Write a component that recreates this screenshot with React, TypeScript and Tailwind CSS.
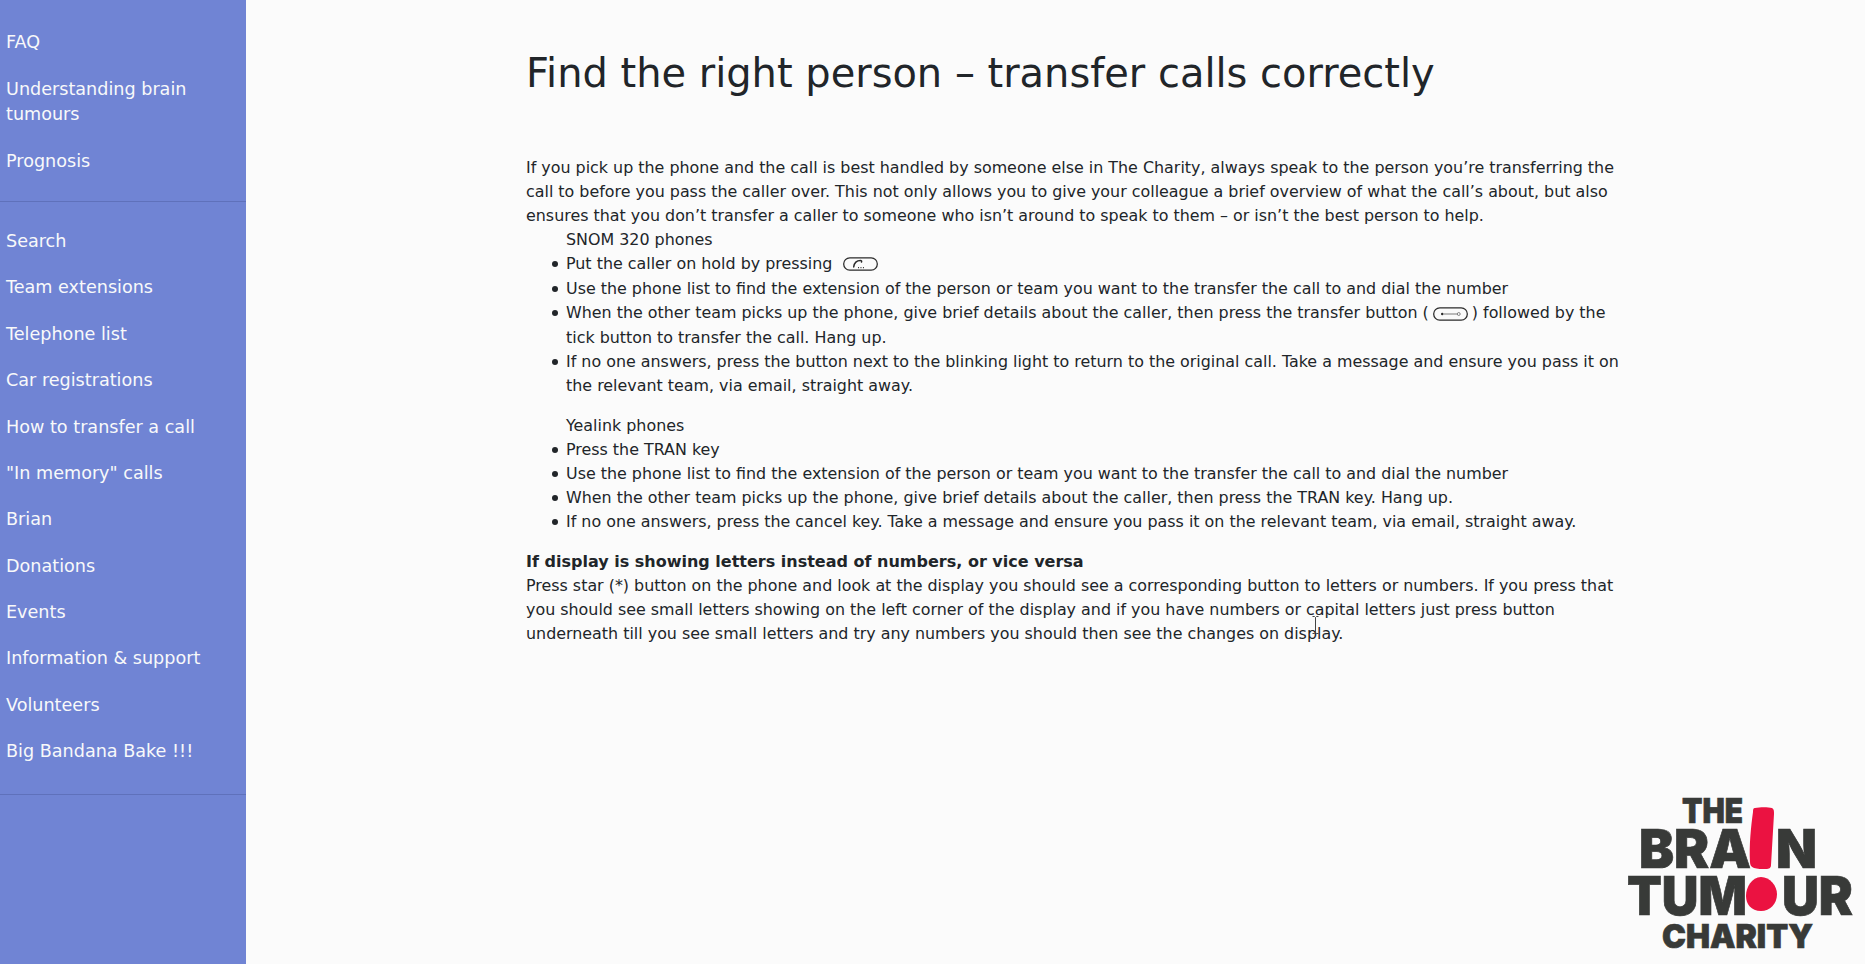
const topLinks = ["FAQ", "Understanding brain tumours", "Prognosis"];
const mainLinks = [
  "Search",
  "Team extensions",
  "Telephone list",
  "Car registrations",
  "How to transfer a call",
  '"In memory" calls',
  "Brian",
  "Donations",
  "Events",
  "Information & support",
  "Volunteers",
  "Big Bandana Bake !!!",
];

const bullet =
  "relative before:absolute before:top-[9px] before:left-[-14px] before:size-[6px] before:rounded-full before:bg-[#212529]";

function HoldKey() {
  return (
    <svg viewBox="0 0 36 14" className="mx-[6px] mb-[6px] inline-block h-[14px] w-[35px] align-[-8px]" fill="none">
      <rect x="0.7" y="0.7" width="34.6" height="12.6" rx="6.3" stroke="#2b2b2b" strokeWidth="1.3" />
      <path d="M11 10c.5-3.5 3-6.5 7-6.5 1 0 1.5.5 1 1.5" stroke="#2b2b2b" strokeWidth="1.5" strokeLinecap="round" />
      <path d="M15.5 10.7h1M18 10.7h1M20.5 10.7h1" stroke="#2b2b2b" strokeWidth="1.1" />
    </svg>
  );
}

function TransferKey() {
  return (
    <svg viewBox="0 0 36 14" className="mx-[4px] mb-[5px] inline-block h-[14px] w-[35px] align-[-8px]" fill="none">
      <rect x="0.7" y="0.7" width="34.6" height="12.6" rx="6.3" stroke="#2b2b2b" strokeWidth="1.3" />
      <circle cx="9.5" cy="7" r="1.3" fill="#2b2b2b" />
      <path d="M11 7h14" stroke="#666" strokeWidth="0.9" />
      <circle cx="26.5" cy="7" r="1.5" stroke="#666" strokeWidth="0.8" />
    </svg>
  );
}

function Logo() {
  const dark = "#383a38";
  const letter = {
    fontFamily: "Inter, 'Liberation Sans', sans-serif",
    fontWeight: 900,
    fill: dark,
    stroke: dark,
    strokeWidth: 0.7,
  };
  return (
    <svg viewBox="0 0 265 184" className="absolute right-0 bottom-0 h-[184px] w-[265px]">
      <text x="82" y="43" fontSize="34" textLength="61" lengthAdjust="spacingAndGlyphs" style={letter}>THE</text>
      <text x="39" y="88" fontSize="54" textLength="112" lengthAdjust="spacingAndGlyphs" style={letter}>BRA</text>
      <text x="176" y="88" fontSize="54" textLength="41" lengthAdjust="spacingAndGlyphs" style={letter}>N</text>
      <text x="27" y="135" fontSize="54" textLength="120" lengthAdjust="spacingAndGlyphs" style={letter}>TUM</text>
      <text x="182" y="135" fontSize="54" textLength="71" lengthAdjust="spacingAndGlyphs" style={letter}>UR</text>
      <text x="62" y="168" fontSize="33" textLength="151" lengthAdjust="spacingAndGlyphs" style={letter}>CHARITY</text>
      <path d="M155 28c5-1 13-1 17 0 2 1 2 3 2 6l-3 51c0 3-2 4-5 4-4 0-9 0-12-1-3-1-4-3-4-6-1-16 1-36 3-50 0-2 0-4 2-4z" fill="#eb1241" />
      <path d="M161 97c9 0 16 9 16 17 0 10-7 17-16 17-10 0-15-7-15-15 0-9 6-19 15-19z" fill="#eb1241" />
    </svg>
  );
}

function Cursor() {
  return (
    <svg viewBox="0 0 9 18" className="absolute top-[616px] left-[1311px] h-[18px] w-[9px]" fill="none">
      <path d="M1.5 .5h2l1 1 1-1h2M4.5 1.5v15M1.5 17.5h2l1-1 1 1h2" stroke="#444" strokeWidth="1" />
    </svg>
  );
}

export default function App() {
  return (
    <div className="relative flex h-[964px] overflow-hidden bg-[#fbfbfb] font-['DejaVu_Sans',sans-serif] text-[#212529]">
      <aside className="w-[246px] shrink-0 bg-[#7084d4] text-[17.6px] leading-[25.6px] text-[#f8f9fa]">
        <nav className="border-b border-[#5f71bb] pt-[20px] pb-[16px]">
          {topLinks.map((link) => (
            <div key={link} className="py-[10.4px] pr-4 pl-[6px]">{link}</div>
          ))}
        </nav>
        <nav className="border-b border-[#5f71bb] pt-[17px] pb-[19px]">
          {mainLinks.map((link) => (
            <div key={link} className="py-[10.4px] pr-4 pl-[6px]">{link}</div>
          ))}
        </nav>
      </aside>

      <main className="box-content w-[1095px] pt-[46px] pl-[280px] text-[15.9px] leading-[24px]">
        <h1 className="mb-[56px] text-[39.95px] leading-[54px] font-normal">Find the right person – transfer calls correctly</h1>

        <p>
          If you pick up the phone and the call is best handled by someone else in The Charity, always speak to the person you’re transferring the call to before you pass the caller over. This not only allows you to give your colleague a brief overview of what the call’s about, but also ensures that you don’t transfer a caller to someone who isn’t around to speak to them – or isn’t the best person to help.
        </p>

        <ul className="mb-4 list-none pl-10">
          SNOM 320 phones
          <li className={bullet}>Put the caller on hold by pressing <HoldKey /></li>
          <li className={bullet}>Use the phone list to find the extension of the person or team you want to the transfer the call to and dial the number</li>
          <li className={bullet}>When the other team picks up the phone, give brief details about the caller, then press the transfer button (<TransferKey />) followed by the tick button to transfer the call. Hang up.</li>
          <li className={bullet}>If no one answers, press the button next to the blinking light to return to the original call. Take a message and ensure you pass it on the relevant team, via email, straight away.</li>
        </ul>

        <ul className="mb-4 list-none pl-10">
          Yealink phones
          <li className={bullet}>Press the TRAN key</li>
          <li className={bullet}>Use the phone list to find the extension of the person or team you want to the transfer the call to and dial the number</li>
          <li className={bullet}>When the other team picks up the phone, give brief details about the caller, then press the TRAN key. Hang up.</li>
          <li className={bullet}>If no one answers, press the cancel key. Take a message and ensure you pass it on the relevant team, via email, straight away.</li>
        </ul>

        <p className="text-[16px] font-bold">If display is showing letters instead of numbers, or vice versa</p>
        <p>
          Press star (*) button on the phone and look at the display you should see a corresponding button to letters or numbers. If you press that you should see small letters showing on the left corner of the display and if you have numbers or capital letters just press button underneath till you see small letters and try any numbers you should then see the changes on display.
        </p>
      </main>

      <Logo />
      <Cursor />
    </div>
  );
}
